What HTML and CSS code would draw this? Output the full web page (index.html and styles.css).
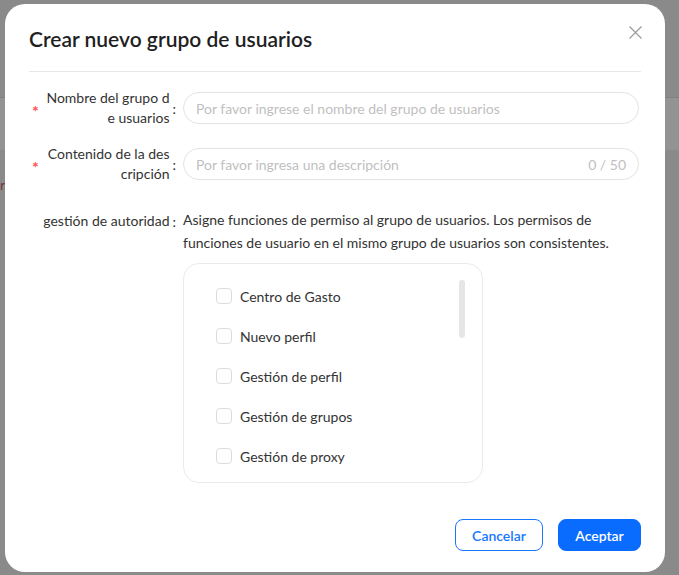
FILE: index.html
```html
<!DOCTYPE html>
<html lang="es">
<head>
    <meta charset="UTF-8">
    <meta name="viewport" content="width=device-width, initial-scale=1.0">
    <title>Crear nuevo grupo de usuarios</title>
    <link rel="stylesheet" href="styles.css">
</head>
<body>
    <div class="page">
        <div class="page-top"></div>
        <div class="page-band"></div>
        <div class="page-row"><span class="page-text">r</span></div>
    </div>

    <div class="mask">
        <div class="modal">
            <div class="modal-header">
                <h2 class="modal-title">Crear nuevo grupo de usuarios</h2>
                <button class="modal-close" aria-label="Cerrar">
                    <svg width="13" height="13" viewBox="0 0 13 13">
                        <path d="M0.5 0.5L12.5 12.5M12.5 0.5L0.5 12.5" stroke="#9a9a9a" stroke-width="1.2" fill="none"/>
                    </svg>
                </button>
            </div>

            <form class="form">
                <div class="form-item">
                    <label class="form-label">
                        <span class="req">*</span>
                        <span class="label-text">Nombre del grupo d<br>e usuarios</span>
                        <span class="colon">:</span>
                    </label>
                    <div class="form-control">
                        <input class="input" type="text" placeholder="Por favor ingrese el nombre del grupo de usuarios">
                    </div>
                </div>

                <div class="form-item">
                    <label class="form-label">
                        <span class="req">*</span>
                        <span class="label-text">Contenido de la des<br>cripción</span>
                        <span class="colon">:</span>
                    </label>
                    <div class="form-control">
                        <div class="input input-count">
                            <input type="text" placeholder="Por favor ingresa una descripción">
                            <span class="count">0 / 50</span>
                        </div>
                    </div>
                </div>

                <div class="form-item form-item-top">
                    <label class="form-label">
                        <span class="label-text">gestión de autoridad</span>
                        <span class="colon">:</span>
                    </label>
                    <div class="form-control">
                        <p class="help">Asigne funciones de permiso al grupo de usuarios. Los permisos de funciones de usuario en el mismo grupo de usuarios son consistentes.</p>
                        <div class="perm-box">
                            <ul class="perm-list">
                                <li><label class="check"><input type="checkbox"><span class="box"></span>Centro de Gasto</label></li>
                                <li><label class="check"><input type="checkbox"><span class="box"></span>Nuevo perfil</label></li>
                                <li><label class="check"><input type="checkbox"><span class="box"></span>Gestión de perfil</label></li>
                                <li><label class="check"><input type="checkbox"><span class="box"></span>Gestión de grupos</label></li>
                                <li><label class="check"><input type="checkbox"><span class="box"></span>Gestión de proxy</label></li>
                            </ul>
                            <div class="scroll-thumb"></div>
                        </div>
                    </div>
                </div>
            </form>

            <div class="modal-footer">
                <button class="btn btn-default" type="button">Cancelar</button>
                <button class="btn btn-primary" type="button">Aceptar</button>
            </div>
        </div>
    </div>
</body>
</html>
```

FILE: styles.css
```css
* {
    box-sizing: border-box;
}
body {
    margin: 0;
    font-family: Lato, "Noto Sans", sans-serif;
    font-size: 14px;
    color: #333;
    background: #8a8a8a;
    height: 575px;
    overflow: hidden;
}
.page-top {
    height: 97px;
}
.page-band {
    height: 53px;
    border-top: 1px solid #808080;
    background: #939393;
}
.page-row {
    height: 60px;
    padding-top: 26px;
}
.page-text {
    color: #6e3a3a;
    font-size: 14px;
}
.mask {
    position: absolute;
    left: 0;
    top: 0;
    right: 0;
    bottom: 0;
}
.modal {
    position: absolute;
    left: 5px;
    top: 4px;
    width: 660px;
    height: 568px;
    background: #fff;
    border-radius: 20px;
    padding: 21px 24px 0 24px;
}
.modal-header {
    display: flex;
    justify-content: space-between;
    align-items: flex-start;
    padding-bottom: 18px;
    border-bottom: 1px solid #e8e8e8;
}
.modal-title {
    margin: 0;
    font-size: 21px;
    font-weight: 600;
    line-height: 28px;
    color: #1f1f1f;
}
.modal-close {
    border: none;
    background: none;
    padding: 0;
    margin-top: 1px;
    margin-right: -1px;
    width: 13px;
    height: 13px;
    cursor: pointer;
}
.form {
    padding-top: 16px;
}
.form-item {
    display: flex;
    align-items: center;
    margin-bottom: 16px;
}
.form-item-top {
    align-items: flex-start;
    margin-top: 24px;
}
.form-label {
    width: 154px;
    flex-shrink: 0;
    display: flex;
    align-items: center;
    justify-content: flex-end;
    padding-right: 7px;
    color: #333;
    line-height: 20px;
}
.req {
    color: #ff4d4f;
    margin-left: 3px;
    margin-right: auto;
    font-size: 16px;
    font-weight: 700;
    line-height: 1;
    padding-top: 6px;
}
.label-text {
    text-align: right;
}
.colon {
    margin-left: 3px;
    margin-top: 2px;
}
.form-item-top .form-label {
    line-height: 23px;
}
.form-control {
    flex: 1;
}
.input {
    display: block;
    width: 456px;
    height: 32px;
    border: 1px solid #e3e3e3;
    border-radius: 16px;
    padding: 0 12px;
    font-family: inherit;
    font-size: 14px;
    color: #333;
    outline: none;
}
.input::placeholder,
.input input::placeholder {
    color: #bfbfbf;
}
.input-count {
    display: flex;
    align-items: center;
}
.input-count input {
    flex: 1;
    border: none;
    outline: none;
    padding: 0;
    font-family: inherit;
    font-size: 14px;
}
.count {
    color: #bfbfbf;
    font-size: 14px;
}
.help {
    margin: 0 0 9px 0;
    line-height: 23px;
    color: #333;
}
.perm-box {
    position: relative;
    width: 300px;
    height: 220px;
    border: 1px solid #ebebeb;
    border-radius: 16px;
    overflow: hidden;
}
.perm-list {
    list-style: none;
    margin: 0;
    padding: 12px 0 0 32px;
}
.perm-list li {
    height: 40px;
    display: flex;
    align-items: center;
}
.check {
    display: flex;
    align-items: center;
    color: #333;
    cursor: pointer;
}
.check input {
    display: none;
}
.box {
    width: 16px;
    height: 16px;
    border: 1px solid #dcdcdc;
    border-radius: 4px;
    margin-right: 8px;
}
.scroll-thumb {
    position: absolute;
    top: 16px;
    right: 17px;
    width: 6px;
    height: 58px;
    border-radius: 3px;
    background: #e6e6e6;
}
.modal-footer {
    position: absolute;
    right: 24px;
    bottom: 21px;
    display: flex;
    gap: 15px;
}
.btn {
    height: 32px;
    border-radius: 8px;
    font-family: inherit;
    font-size: 14px;
    font-weight: 600;
    cursor: pointer;
}
.btn-default {
    width: 88px;
    background: #fff;
    border: 1px solid #1677ff;
    color: #1677ff;
}
.btn-primary {
    width: 83px;
    background: #0a6cff;
    border: 1px solid #0a6cff;
    color: #fff;
}
```
